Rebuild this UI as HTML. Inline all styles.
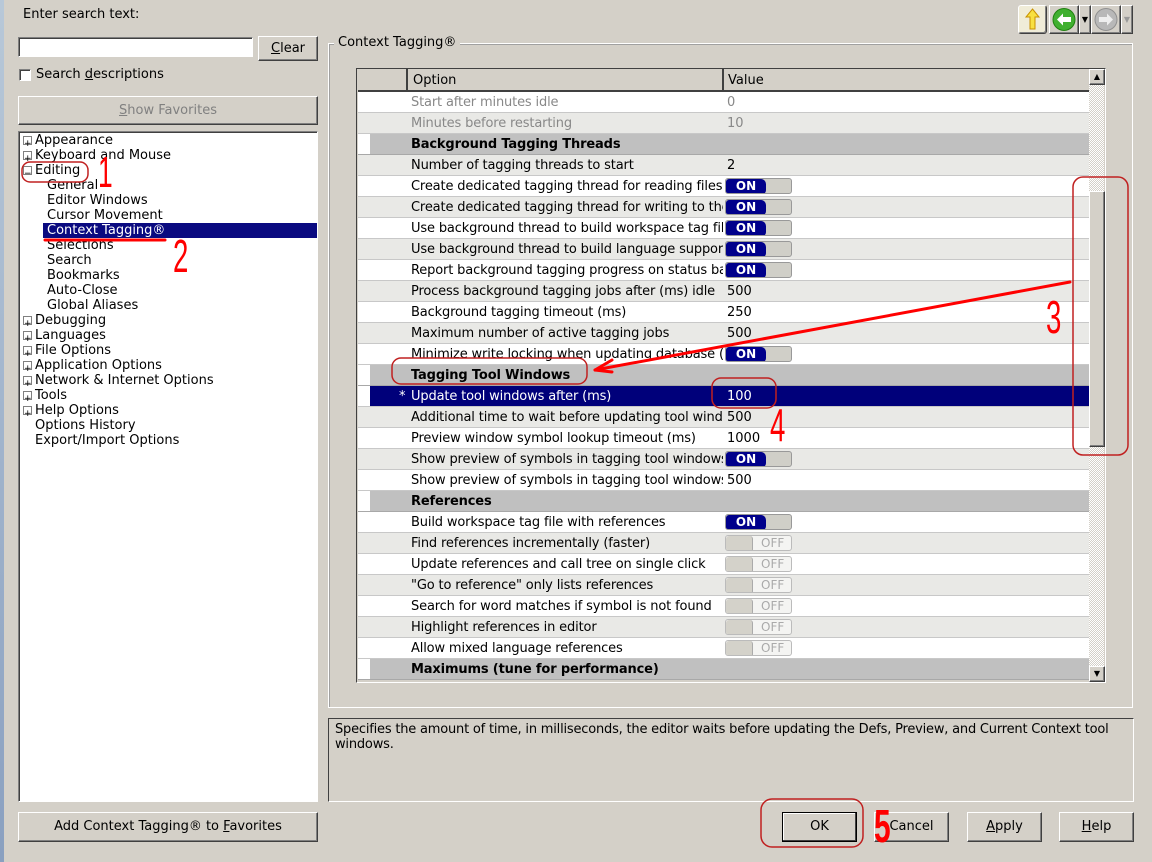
<!DOCTYPE html>
<html><head><meta charset="utf-8"><style>
*{box-sizing:border-box;margin:0;padding:0}
body{width:1152px;height:860px;background:#d4d0c8;font-family:"DejaVu Sans","Liberation Sans",sans-serif;font-size:13px;color:#000;position:relative;overflow:hidden}
#wr{position:absolute;left:0;top:1px;width:1152px;height:860px}
.a{position:absolute}
.btn{position:absolute;background:#d4d0c8;border:1px solid;border-color:#fff #404040 #404040 #fff;box-shadow:inset -1px -1px 0 #808080;text-align:center;font-size:13px}
.sunk{border:1px solid;border-color:#808080 #fff #fff #808080;box-shadow:inset 1px 1px 0 #404040}
.tree div{position:absolute;white-space:nowrap;line-height:15px}
.pm{position:absolute;width:9px;height:9px;border:1px solid #808080;background:#fff;font-size:9px;line-height:7px;text-align:center}
.row{position:absolute;left:358px;width:731px;height:21px;border-bottom:1px solid #c8c8c8}
.row span{position:absolute;top:3px;white-space:nowrap}
.row span.o{width:312px;overflow:hidden;letter-spacing:-0.15px}
.w{background:#fff}.g{background:#e9e9e6}
.h{background:linear-gradient(90deg,#fff 0 12px,#c0c0c0 12px);font-weight:bold;border-bottom:1px solid #a8a8a8}
.o{left:53px}.v{left:369px}
.dis{color:#888}
.on{position:absolute;left:367px;top:2px;width:67px;height:16px;border-radius:3px;background:#d0cfc8;border:1px solid #999;overflow:hidden}
.on b{position:absolute;left:0;top:0;width:40px;height:16px;background:#00008b;color:#fff;font-weight:bold;text-align:center;line-height:14px;font-size:12px;border-radius:3px 5px 5px 3px}
.off{position:absolute;left:367px;top:2px;width:67px;height:16px;border-radius:3px;background:#f4f4f2;border:1px solid #bbb;overflow:hidden}
.off b{position:absolute;left:0;top:0;width:27px;height:16px;background:#d4d2ca;border-right:1px solid #aaa;border-radius:3px}
.off i{position:absolute;left:35px;top:0;font-style:normal;color:#aaa;font-size:12px;line-height:14px}
.num{font-family:"Liberation Sans Narrow","Liberation Sans",sans-serif}
</style></head><body><div id="wr">
<div class="a" style="left:0;top:-1px;width:4px;height:862px;background:linear-gradient(#b8c8d8,#8aa0c0)"></div>
<div class="a" style="left:23px;top:6px">Enter search text:</div>
<div class="a sunk" style="left:18px;top:36px;width:235px;height:20px;background:#fff"></div>
<div class="btn" style="left:258px;top:35px;width:60px;height:25px;line-height:23px"><u>C</u>lear</div>
<div class="a sunk" style="left:19px;top:68px;width:12px;height:12px;background:#fff"></div>
<div class="a" style="left:36px;top:66px">Search <u>d</u>escriptions</div>
<div class="btn" style="left:18px;top:95px;width:300px;height:29px;line-height:27px;color:#808080"><u>S</u>how Favorites</div>
<div class="a sunk tree" style="left:18px;top:130px;width:300px;height:671px;background:#fff">
<div class="pm" style="left:4px;top:4px">+</div><div style="left:16px;top:1px">Appearance</div>
<div class="pm" style="left:4px;top:19px">+</div><div style="left:16px;top:16px">Keyboard and Mouse</div>
<div class="pm" style="left:4px;top:34px">−</div><div style="left:16px;top:31px">Editing</div>
<div style="left:28px;top:46px">General</div>
<div style="left:28px;top:61px">Editor Windows</div>
<div style="left:28px;top:76px">Cursor Movement</div>
<div style="left:24px;top:91px;width:274px;height:15px;background:#0a0a80;color:#fff;padding-left:4px">Context Tagging®</div>
<div style="left:28px;top:106px">Selections</div>
<div style="left:28px;top:121px">Search</div>
<div style="left:28px;top:136px">Bookmarks</div>
<div style="left:28px;top:151px">Auto-Close</div>
<div style="left:28px;top:166px">Global Aliases</div>
<div class="pm" style="left:4px;top:184px">+</div><div style="left:16px;top:181px">Debugging</div>
<div class="pm" style="left:4px;top:199px">+</div><div style="left:16px;top:196px">Languages</div>
<div class="pm" style="left:4px;top:214px">+</div><div style="left:16px;top:211px">File Options</div>
<div class="pm" style="left:4px;top:229px">+</div><div style="left:16px;top:226px">Application Options</div>
<div class="pm" style="left:4px;top:244px">+</div><div style="left:16px;top:241px">Network &amp; Internet Options</div>
<div class="pm" style="left:4px;top:259px">+</div><div style="left:16px;top:256px">Tools</div>
<div class="pm" style="left:4px;top:274px">+</div><div style="left:16px;top:271px">Help Options</div>
<div style="left:16px;top:286px">Options History</div>
<div style="left:16px;top:301px">Export/Import Options</div>
</div>
<div class="btn" style="left:18px;top:811px;width:300px;height:30px;line-height:28px">Add Context Tagging® to <u>F</u>avorites</div>

<div class="a" style="left:328px;top:42px;width:805px;height:665px;border:1px solid #fff;box-shadow:inset 1px 1px 0 #a0a0a0"></div>
<div class="a" style="left:334px;top:34px;background:#d4d0c8;padding:0 4px">Context Tagging®</div>
<div class="btn" style="left:1018px;top:4px;width:29px;height:29px;background:#f0ecd8;border-radius:3px"><svg width="27" height="27"><path d="M13.5 3 L20 11 H16 V23 H11 V11 H7 Z" fill="#f8e040" stroke="#c89000"/></svg></div>
<div class="btn" style="left:1049px;top:4px;width:30px;height:29px"><svg width="28" height="27"><circle cx="14" cy="13.5" r="11" fill="#40b030" stroke="#208010"/><path d="M7 13.5 L13 7.5 V11 H21 V16 H13 V19.5 Z" fill="#fff"/></svg></div>
<div class="btn" style="left:1079px;top:4px;width:12px;height:29px;font-size:8px;line-height:27px">▼</div>
<div class="btn" style="left:1091px;top:4px;width:30px;height:29px"><svg width="28" height="27"><circle cx="14" cy="13.5" r="11" fill="#b8b8b8" stroke="#909090"/><path d="M21 13.5 L15 7.5 V11 H7 V16 H15 V19.5 Z" fill="#eee"/></svg></div>
<div class="btn" style="left:1121px;top:4px;width:12px;height:29px;font-size:8px;line-height:27px;color:#999">▼</div>

<div class="a" style="left:356px;top:67px;width:750px;height:615px;border:1px solid #404040;border-right-color:#fff;border-bottom-color:#fff;background:#d4d0c8"></div>
<div class="a" style="left:358px;top:68px;width:731px;height:23px;background:#d4d0c8;border-bottom:2px solid #404040"></div>
<div class="a" style="left:406px;top:68px;width:2px;height:22px;background:#404040"></div>
<div class="a" style="left:722px;top:68px;width:2px;height:22px;background:#404040"></div>
<div class="a" style="left:413px;top:72px">Option</div>
<div class="a" style="left:728px;top:72px">Value</div>
<div class="a" style="left:1089px;top:84px;width:15px;height:582px;background:repeating-conic-gradient(#d4d0c8 0 25%,#fff 0 50%) 0 0/2px 2px"></div>
<div class="btn" style="left:1089px;top:68px;width:16px;height:16px;font-size:8px;line-height:14px">▲</div>
<div class="btn" style="left:1089px;top:190px;width:16px;height:256px"></div>
<div class="btn" style="left:1089px;top:665px;width:16px;height:16px;font-size:8px;line-height:14px">▼</div>

<div class="row w" style="top:91px"><span class="o dis">Start after minutes idle</span><span class="v dis">0</span></div>
<div class="row g" style="top:112px"><span class="o dis">Minutes before restarting</span><span class="v dis">10</span></div>
<div class="row h" style="top:133px"><span class="o">Background Tagging Threads</span></div>
<div class="row g" style="top:154px"><span class="o">Number of tagging threads to start</span><span class="v">2</span></div>
<div class="row w" style="top:175px"><span class="o">Create dedicated tagging thread for reading files</span><div class="on"><b>ON</b></div></div>
<div class="row g" style="top:196px"><span class="o">Create dedicated tagging thread for writing to the</span><div class="on"><b>ON</b></div></div>
<div class="row w" style="top:217px"><span class="o">Use background thread to build workspace tag fil</span><div class="on"><b>ON</b></div></div>
<div class="row g" style="top:238px"><span class="o">Use background thread to build language support</span><div class="on"><b>ON</b></div></div>
<div class="row w" style="top:259px"><span class="o">Report background tagging progress on status ba</span><div class="on"><b>ON</b></div></div>
<div class="row g" style="top:280px"><span class="o">Process background tagging jobs after (ms) idle</span><span class="v">500</span></div>
<div class="row w" style="top:301px"><span class="o">Background tagging timeout (ms)</span><span class="v">250</span></div>
<div class="row g" style="top:322px"><span class="o">Maximum number of active tagging jobs</span><span class="v">500</span></div>
<div class="row w" style="top:343px"><span class="o">Minimize write locking when updating database (u</span><div class="on"><b>ON</b></div></div>
<div class="row h" style="top:364px"><span class="o">Tagging Tool Windows</span></div>
<div class="row" style="top:385px;background:linear-gradient(90deg,#fff 0 12px,#00007a 12px);color:#fff"><span style="left:41px">*</span><span class="o">Update tool windows after (ms)</span><span class="v">100</span></div>
<div class="row g" style="top:406px"><span class="o">Additional time to wait before updating tool windo</span><span class="v">500</span></div>
<div class="row w" style="top:427px"><span class="o">Preview window symbol lookup timeout (ms)</span><span class="v">1000</span></div>
<div class="row g" style="top:448px"><span class="o">Show preview of symbols in tagging tool windows</span><div class="on"><b>ON</b></div></div>
<div class="row w" style="top:469px"><span class="o">Show preview of symbols in tagging tool windows</span><span class="v">500</span></div>
<div class="row h" style="top:490px"><span class="o">References</span></div>
<div class="row w" style="top:511px"><span class="o">Build workspace tag file with references</span><div class="on"><b>ON</b></div></div>
<div class="row g" style="top:532px"><span class="o">Find references incrementally (faster)</span><div class="off"><b></b><i>OFF</i></div></div>
<div class="row w" style="top:553px"><span class="o">Update references and call tree on single click</span><div class="off"><b></b><i>OFF</i></div></div>
<div class="row g" style="top:574px"><span class="o">"Go to reference" only lists references</span><div class="off"><b></b><i>OFF</i></div></div>
<div class="row w" style="top:595px"><span class="o">Search for word matches if symbol is not found</span><div class="off"><b></b><i>OFF</i></div></div>
<div class="row g" style="top:616px"><span class="o">Highlight references in editor</span><div class="off"><b></b><i>OFF</i></div></div>
<div class="row w" style="top:637px"><span class="o">Allow mixed language references</span><div class="off"><b></b><i>OFF</i></div></div>
<div class="row h" style="top:658px;height:21px"><span class="o">Maximums (tune for performance)</span></div>

<div class="a" style="left:328px;top:717px;width:806px;height:84px;border:1px solid;border-color:#404040 #fff #fff #404040"></div>
<div class="a" style="left:335px;top:721px;width:796px;line-height:15px;letter-spacing:-0.2px">Specifies the amount of time, in milliseconds, the editor waits before updating the Defs, Preview, and Current Context tool windows.</div>

<div class="btn" style="left:782px;top:811px;width:75px;height:30px;line-height:28px;border-color:#000;box-shadow:inset -1px -1px 0 #404040,inset 1px 1px 0 #fff">OK</div>
<div class="btn" style="left:874px;top:811px;width:75px;height:30px;line-height:28px">Cancel</div>
<div class="btn" style="left:967px;top:811px;width:75px;height:30px;line-height:28px"><u>A</u>pply</div>
<div class="btn" style="left:1059px;top:811px;width:75px;height:30px;line-height:28px"><u>H</u>elp</div>

<svg class="a" style="left:0;top:0" width="1152" height="860" fill="none" stroke-linecap="round">
<g stroke="#c02020" stroke-width="1.5">
<rect x="22" y="161" width="66" height="20" rx="8"/>
<rect x="392" y="357" width="195" height="26" rx="9"/>
<rect x="712" y="377" width="64" height="30" rx="9"/>
<rect x="1073" y="176" width="55" height="278" rx="10"/>
<rect x="761" y="798" width="102" height="48" rx="11"/>
</g>
<g stroke="#ff0000" stroke-width="3">
<path d="M45 239 H165"/>
<path d="M1070 281 L595 369"/>
<path d="M595 369 L612 359 M595 369 L612 371"/>
</g>
<g fill="#ff0000" class="num" stroke="none">
<text x="98" y="186" font-size="44" transform="translate(98 186) scale(0.6 1) translate(-98 -186)">1</text>
<text x="173" y="271" font-size="46" transform="translate(173 271) scale(0.6 1) translate(-173 -271)">2</text>
<text x="1046" y="332" font-size="46" transform="translate(1046 332) scale(0.6 1) translate(-1046 -332)">3</text>
<text x="770" y="440" font-size="46" transform="translate(770 440) scale(0.6 1) translate(-770 -440)">4</text>
<text x="874" y="841" font-size="46" font-weight="bold" transform="translate(874 841) scale(0.65 1) translate(-874 -841)">5</text>
</g>
</svg>
</div></body></html>
